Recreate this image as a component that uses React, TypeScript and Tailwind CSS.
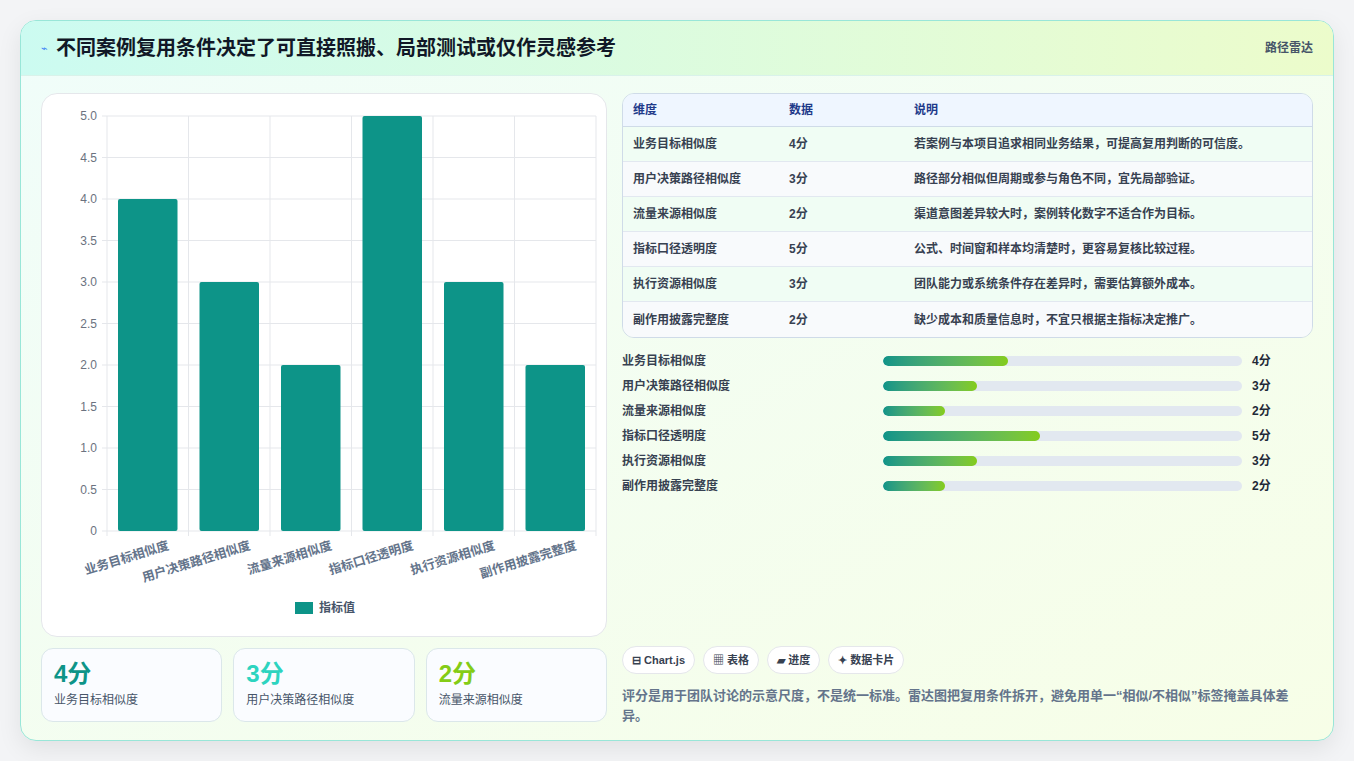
import React from "react";

const dims = ["业务目标相似度","用户决策路径相似度","流量来源相似度","指标口径透明度","执行资源相似度","副作用披露完整度"];
const vals = [4,3,2,5,3,2];
const notes = ["若案例与本项目追求相同业务结果，可提高复用判断的可信度。","路径部分相似但周期或参与角色不同，宜先局部验证。","渠道意图差异较大时，案例转化数字不适合作为目标。","公式、时间窗和样本均清楚时，更容易复核比较过程。","团队能力或系统条件存在差异时，需要估算额外成本。","缺少成本和质量信息时，不宜只根据主指标决定推广。"];
const barW: Record<number, number> = {5:157,4:125,3:94,2:62};

function Chart() {
  const x0 = 65, x1 = 554, yTop = 22, yBot = 437;
  const cw = (x1 - x0) / 6;
  const ticks = [0,0.5,1,1.5,2,2.5,3,3.5,4,4.5,5];
  const yv = (v: number) => yBot - (v / 5) * (yBot - yTop);
  return (
    <svg width="566" height="543" className="block" style={{fontFamily: "'Liberation Sans','Noto Sans CJK SC',sans-serif"}}>
      {ticks.map(t => (
        <g key={t}>
          <line x1={x0 - 5} x2={x1} y1={yv(t)} y2={yv(t)} stroke="#e5e7eb" />
          <text x={x0 - 10} y={yv(t) + 4} textAnchor="end" fontSize="12" fill="#6b7280">{t === 0 ? "0" : t.toFixed(1)}</text>
        </g>
      ))}
      {Array.from({length: 7}).map((_, i) => (
        <line key={i} x1={x0 + i * cw} x2={x0 + i * cw} y1={yTop} y2={yBot + 5} stroke="#e5e7eb" />
      ))}
      {vals.map((v, i) => (
        <rect key={i} x={x0 + i * cw + 11} y={yv(v)} width={cw - 22} height={yBot - yv(v)} rx="2" fill="#0d9488" />
      ))}
      {dims.map((d, i) => (
        <text key={d} transform={`translate(${x0 + i * cw + cw / 2 + 22},${yBot + 18}) rotate(-17)`} textAnchor="end" fontSize="12.5" fontWeight="700" fill="#64748b">{d}</text>
      ))}
      <rect x="253" y="508" width="18" height="12" fill="#0d9488" />
      <text x="277" y="518" fontSize="12" fill="#475569" fontWeight="700">指标值</text>
    </svg>
  );
}

export default function App() {
  return (
    <div className="w-[1354px] h-[761px] bg-[#f3f4f6] p-5 pb-0" style={{fontFamily: "'Liberation Sans','Noto Sans CJK SC',sans-serif"}}>
      <div className="h-[721px] rounded-2xl border border-[#99e6d8] bg-gradient-to-br from-[#f0fdfa] to-[#f7fee7] shadow-[0_8px_24px_rgba(0,0,0,0.08)] overflow-hidden flex flex-col">
        <div className="h-[55px] shrink-0 flex items-center justify-between px-5 bg-gradient-to-r from-[#ccfbf1] to-[#ecfccb] border-b border-[#d9f2ea]">
          <div className="flex items-center gap-2">
            <span className="text-[11px] text-[#3b82f6]">⌁</span>
            <h1 className="text-[20px] font-bold text-[#111827]">不同案例复用条件决定了可直接照搬、局部测试或仅作灵感参考</h1>
          </div>
          <span className="text-[12px] font-bold text-[#475569]">路径雷达</span>
        </div>
        <div className="flex gap-[15px] px-5 pt-[17px]">
          <div className="w-[566px] flex flex-col gap-[11px]">
            <div className="h-[544px] rounded-2xl border border-[#e5e7eb] bg-white"><Chart /></div>
            <div className="grid grid-cols-3 gap-[11px]">
              {[0,1,2].map(i => (
                <div key={i} className="h-[74px] rounded-xl border border-[#dbe7ea] bg-[#fafcff] px-3 pt-[10px]">
                  <div className={`text-[24px] font-bold leading-[30px] ${["text-[#0d9488]","text-[#2dd4bf]","text-[#84cc16]"][i]}`}>{vals[i]}分</div>
                  <div className="text-[12px] text-[#475569] mt-[2px]">{dims[i]}</div>
                </div>
              ))}
            </div>
          </div>
          <div className="w-[693px] flex flex-col">
            <div className="rounded-xl border border-[#cfdbe8] overflow-hidden text-[12px] font-bold">
              <div className="flex h-[33px] items-center bg-[#eff6ff] text-[#1e3a8a] border-b border-[#cfdbe8]">
                <div className="w-[166px] pl-[10px]">维度</div><div className="w-[125px]">数据</div><div>说明</div>
              </div>
              {dims.map((d, i) => (
                <div key={d} className={`flex h-[35px] items-center text-[#374151] ${i < 5 ? "border-b border-[#e2e8f0]" : ""} ${i % 2 ? "bg-[#f8fafc]" : "bg-[#f0fdf4]"}`}>
                  <div className="w-[166px] pl-[10px]">{d}</div><div className="w-[125px]">{vals[i]}分</div><div>{notes[i]}</div>
                </div>
              ))}
            </div>
            <div className="mt-[10px] flex flex-col">
              {dims.map((d, i) => (
                <div key={d} className="flex items-center h-[25px] text-[12px] font-bold text-[#374151]">
                  <div className="w-[261px]">{d}</div>
                  <div className="w-[359px] h-[10px] rounded-full bg-[#e2e8f0] overflow-hidden">
                    <div className="h-full rounded-full bg-gradient-to-r from-[#0d9488] to-[#84cc16]" style={{width: barW[vals[i]]}} />
                  </div>
                  <div className="ml-[10px] text-[#1f2937]">{vals[i]}分</div>
                </div>
              ))}
            </div>
            <div className="mt-[148px] flex gap-[8px]">
              {["⊟ Chart.js","▦ 表格","▰ 进度","✦ 数据卡片"].map(c => (
                <div key={c} className="h-[28px] px-[9px] flex items-center rounded-full border border-[#e5e7eb] bg-white text-[11px] font-bold text-[#374151]">{c}</div>
              ))}
            </div>
            <p className="mt-[12px] text-[13px] font-bold leading-[20px] text-[#64748b]">评分是用于团队讨论的示意尺度，不是统一标准。雷达图把复用条件拆开，避免用单一“相似/不相似”标签掩盖具体差异。</p>
          </div>
        </div>
      </div>
    </div>
  );
}
